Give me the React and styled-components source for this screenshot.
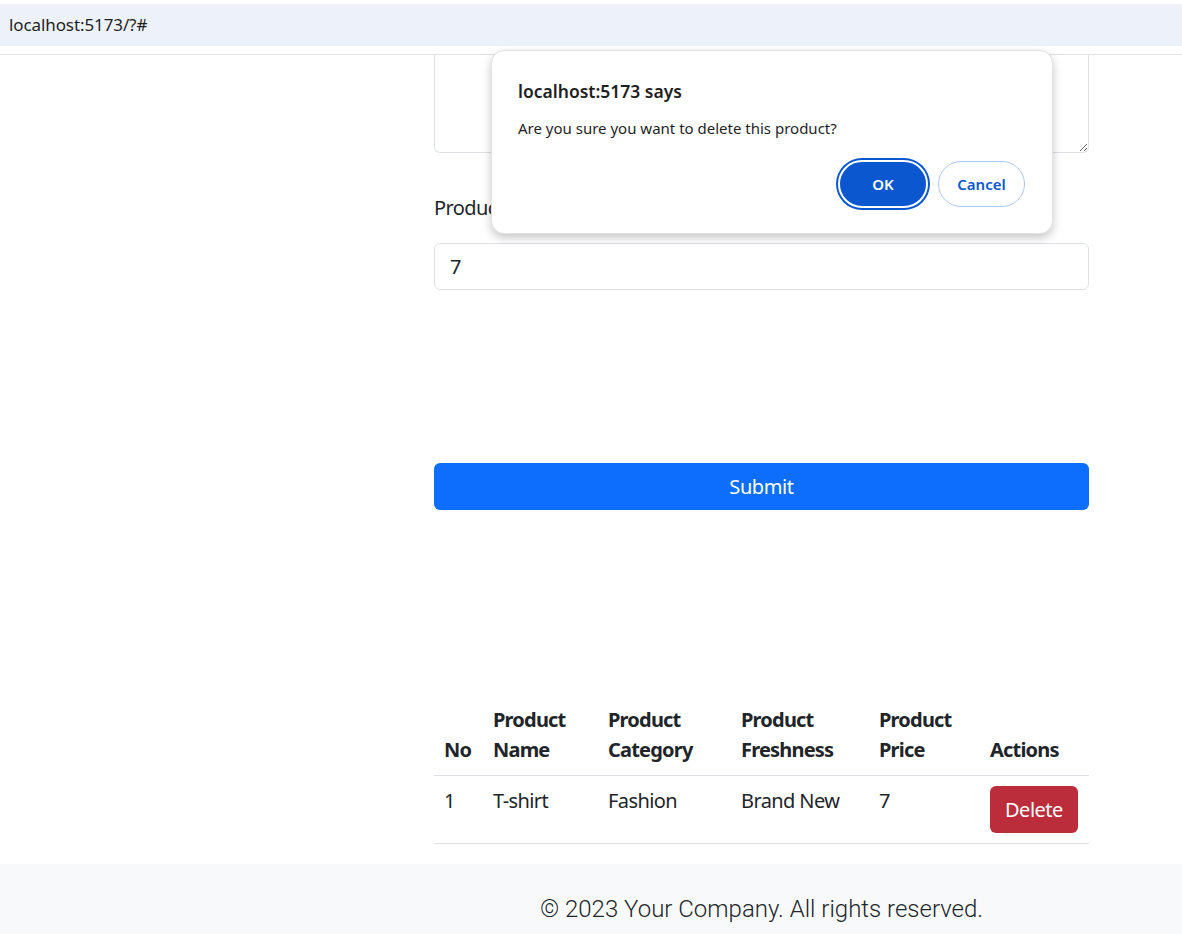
import React from "react";
import styled, { createGlobalStyle } from "styled-components";

// Base styles
const GlobalStyle = createGlobalStyle`
  html, body {
    margin: 0;
    padding: 0;
    background: #ffffff;
  }
  body {
    font-family: "Noto Sans", "Open Sans", sans-serif;
    color: #212529;
    font-size: 20px;
    line-height: 1.5;
  }
  * {
    box-sizing: border-box;
  }
`;

const columns = [
  { key: "no", label: "No", width: 49 },
  { key: "name", label: "Product Name", width: 115 },
  { key: "category", label: "Product Category", width: 133 },
  { key: "freshness", label: "Product Freshness", width: 138 },
  { key: "price", label: "Product Price", width: 111 },
  { key: "actions", label: "Actions", width: 109 },
];

const products = [
  { id: 1, name: "T-shirt", category: "Fashion", freshness: "Brand New", price: 7 },
];

//------------------------------------------------------------------------------

const App = () => {
  return (
    <>
      <GlobalStyle />
      <Page>
        <AddressStrip>
          <AddressBar>localhost:5173/?#</AddressBar>
        </AddressStrip>

        <Layout>
          <Content>
            <TextArea defaultValue="" aria-label="Product Description" />

            <Label htmlFor="price">Product Price</Label>
            <Input id="price" defaultValue="7" />

            <SubmitButton type="button">Submit</SubmitButton>

            <Table>
              <colgroup>
                {columns.map((c) => (
                  <col key={c.key} style={{ width: c.width }} />
                ))}
              </colgroup>
              <thead>
                <tr>
                  {columns.map((c) => (
                    <Th key={c.key}>{c.label}</Th>
                  ))}
                </tr>
              </thead>
              <tbody>
                {products.map((p, index) => (
                  <tr key={p.id}>
                    <Td>{index + 1}</Td>
                    <Td>{p.name}</Td>
                    <Td>{p.category}</Td>
                    <Td>{p.freshness}</Td>
                    <Td>{p.price}</Td>
                    <Td>
                      <DeleteButton type="button">Delete</DeleteButton>
                    </Td>
                  </tr>
                ))}
              </tbody>
            </Table>
          </Content>
        </Layout>

        <Footer>
          <FooterText>© 2023 Your Company. All rights reserved.</FooterText>
        </Footer>

        <Dialog role="alertdialog">
          <DialogTitle>localhost:5173 says</DialogTitle>
          <DialogMessage>Are you sure you want to delete this product?</DialogMessage>
          <DialogActions>
            <DialogButton $primary type="button">OK</DialogButton>
            <DialogButton type="button">Cancel</DialogButton>
          </DialogActions>
        </Dialog>
      </Page>
    </>
  );
};

//------------------------------------------------------------------------------
// CSS Styling
const Page = styled.div`
  position: relative;
  width: 1182px;
  height: 934px;
  overflow: hidden;
`;

const AddressStrip = styled.div`
  height: 55px;
  padding-top: 4px;
  border-bottom: 1px solid #e3e3e3;
`;

const AddressBar = styled.div`
  height: 42px;
  background: #edf2fa;
  display: flex;
  align-items: center;
  padding-left: 9px;
  font-size: 17px;
  color: #1f1f1f;
  letter-spacing: -0.1px;
`;

const Layout = styled.div`
  display: grid;
  grid-template-columns: 434px 655px 1fr;
`;

const Content = styled.main`
  grid-column: 2;
  display: flex;
  flex-direction: column;
`;

const TextArea = styled.textarea`
  display: block;
  width: 100%;
  height: 98px;
  border: 1px solid #dee2e6;
  border-top: 0;
  border-radius: 0 0 6px 6px;
  font: inherit;
  padding: 8px 15px;
  resize: vertical;
  outline: none;
`;

const Label = styled.label`
  margin-top: 40px;
  margin-bottom: 20px;
  line-height: 30px;
  letter-spacing: -0.6px;
`;

const Input = styled.input`
  height: 47px;
  width: 100%;
  border: 1px solid #dee2e6;
  border-radius: 6px;
  padding: 0 15px;
  font: inherit;
  color: #212529;
  outline: none;
`;

const SubmitButton = styled.button`
  margin-top: 173px;
  height: 47px;
  width: 100%;
  border: 0;
  border-radius: 6px;
  background: #0d6efd;
  color: #ffffff;
  font: inherit;
  letter-spacing: -0.4px;
  cursor: pointer;
`;

const Table = styled.table`
  margin-top: 185px;
  margin-bottom: 20px;
  width: 100%;
  table-layout: fixed;
  border-collapse: collapse;
`;

const Th = styled.th`
  text-align: left;
  vertical-align: bottom;
  font-weight: 700;
  padding: 10px;
  line-height: 30px;
  border-bottom: 1px solid #dee2e6;
  letter-spacing: -0.8px;
`;

const Td = styled.td`
  vertical-align: top;
  padding: 10px;
  line-height: 30px;
  border-bottom: 1px solid #dee2e6;
  letter-spacing: -0.6px;
  white-space: nowrap;
`;

const DeleteButton = styled.button`
  height: 47px;
  padding: 0 15px;
  border: 0;
  border-radius: 6px;
  background: #bb2d3b;
  color: #ffffff;
  font: inherit;
  letter-spacing: -0.5px;
  cursor: pointer;
`;

const Footer = styled.footer`
  display: grid;
  grid-template-columns: 434px 655px 1fr;
  background: #f8f9fa;
  padding: 27px 0 20px;
`;

const FooterText = styled.p`
  grid-column: 2;
  margin: 0;
  text-align: center;
  font-family: Roboto, "Noto Sans", sans-serif;
  font-weight: 300;
  font-size: 24px;
  line-height: 36px;
  color: #212529;
`;

const Dialog = styled.div`
  position: absolute;
  left: 491px;
  top: 50px;
  width: 562px;
  height: 184px;
  background: #ffffff;
  border: 1px solid #e2e2e2;
  border-radius: 13px;
  box-shadow: 0 4px 10px rgba(0, 0, 0, 0.22);
  padding: 28px 27px 0 26px;
  display: flex;
  flex-direction: column;
`;

const DialogTitle = styled.div`
  font-size: 17.5px;
  font-weight: 600;
  line-height: 24px;
  color: #1f1f1f;
`;

const DialogMessage = styled.div`
  margin-top: 15px;
  font-size: 15px;
  line-height: 20px;
  color: #1f1f1f;
`;

const DialogActions = styled.div`
  margin-top: 22px;
  display: flex;
  justify-content: flex-end;
  align-items: center;
  gap: 10px;
`;

const DialogButton = styled.button`
  font-family: "Noto Sans", sans-serif;
  font-size: 15px;
  font-weight: 600;
  border-radius: 999px;
  cursor: pointer;
  padding: 0 18px;
  height: ${(p) => (p.$primary ? "48px" : "46px")};
  min-width: ${(p) => (p.$primary ? "90px" : "87px")};
  color: ${(p) => (p.$primary ? "#ffffff" : "#0b57d0")};
  background: ${(p) => (p.$primary ? "#0b57d0" : "#ffffff")};
  border: ${(p) => (p.$primary ? "2px solid #ffffff" : "1px solid #a8c7fa")};
  box-shadow: ${(p) => (p.$primary ? "0 0 0 2px #0b57d0" : "none")};
`;

export default App;
